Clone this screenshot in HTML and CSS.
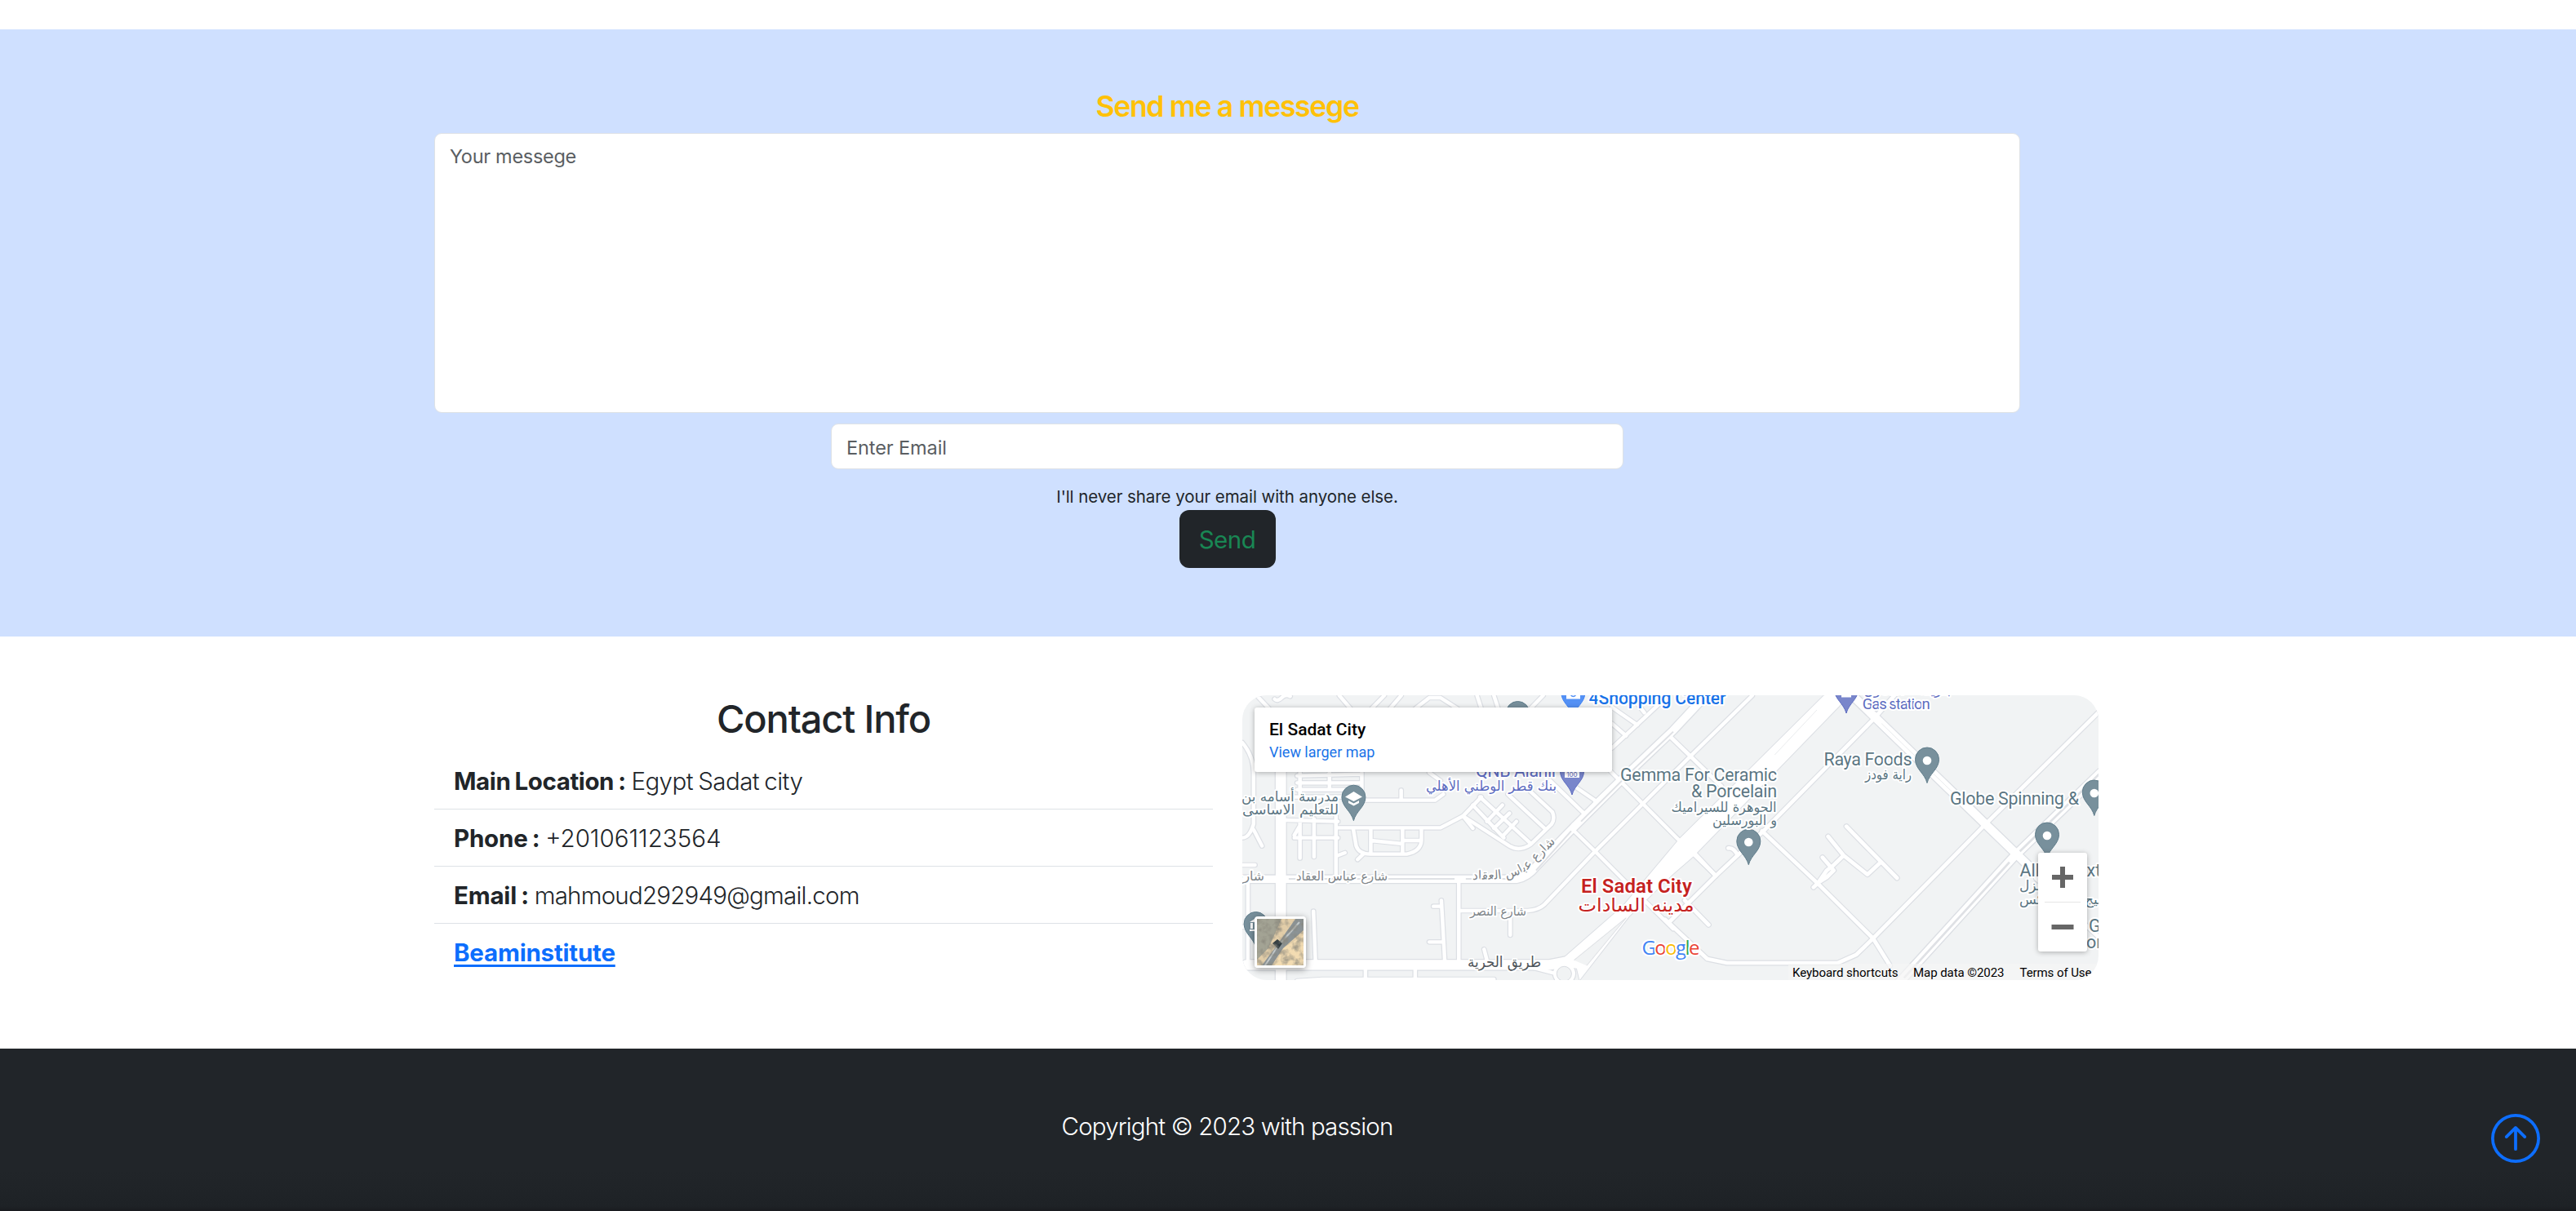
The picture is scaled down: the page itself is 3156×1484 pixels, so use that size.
FILE: index.html
```html
<!DOCTYPE html>
<html lang="en">
<head>
<meta charset="utf-8">
<title>Contact</title>
<link rel="stylesheet" href="styles.css">
</head>
<body>
<section class="message">
  <h3 class="message-title">Send me a messege</h3>
  <form class="message-form">
    <textarea class="field field-area" placeholder="Your messege"></textarea>
    <input class="field field-email" type="email" placeholder="Enter Email">
    <p class="hint">I'll never share your email with anyone else.</p>
    <button class="send" type="button">Send</button>
  </form>
</section>

<section class="contact">
  <div class="info">
    <h2 class="info-title">Contact Info</h2>
    <ul class="info-list">
      <li><b class="place">Main Location :</b> <span class="city">Egypt Sadat city</span></li>
      <li><b>Phone :</b> <span>+201061123564</span></li>
      <li><b>Email :</b> <span class="address">mahmoud292949@gmail.com</span></li>
      <li><a href="#">Beaminstitute</a></li>
    </ul>
  </div>
  <div class="map">
    <svg class="map-canvas" viewBox="0 0 1049 349" width="1049" height="349">
      <defs>
        <g id="west-minor">
          <path d="M805 828H1050Q1090 825 1110 805L1290 610L1629 260L1849 37"/>
          <path d="M1330 300L1460 435L1580 560L1720 700M1215 535L1290 610L1420 745M1470 795L1568 895"/>
          <path d="M375 523H740L820 480L885 410M470 422H720L750 400M600 422V385M820 480L855 525"/>
          <path d="M820 480L985 590Q1020 612 1060 585L1135 510Q1148 490 1138 465L1060 390"/>
          <path d="M855 440L965 560M905 500L960 440M930 525L985 470M960 555L1010 500M880 410L1060 580M980 400L1110 525"/>
          <path d="M1215 370L1300 430M1130 350L1250 470M700 320L740 350M1290 430L1400 320"/>
          <path d="M368 480V700M430 530L440 590Q450 620 490 620H620Q670 610 672 570V530M492 530V620M605 530V615M492 570L605 582M605 570H670M465 620L445 640M375 625L400 615"/>
          <path d="M220 560H375M290 490V630M240 500V635M240 515L220 550M190 495L375 500"/>
          <path d="M230 332L460 326M230 358H460M230 383H460M240 320V400M345 320V380M460 320V400M190 410H390"/>
          <path d="M35 210Q75 260 75 320V510Q60 560 35 560M75 530L105 590M35 660H80M55 712V1010M35 888H55"/>
          <path d="M288 830L295 1010M805 712V1010M743 790L755 1010M715 812H743M700 943H750M988 850V918M895 970L905 1010"/>
          <path d="M473 1045V1083M650 1045V1083M230 1086L320 1080H930"/>
          <path d="M80 30L130 85M150 50Q160 60 175 45T205 40M380 37L420 85M495 85L540 37M560 85L600 37M650 85L700 45H740L800 85M870 37L885 85M930 37L945 85M1060 85L1105 37"/>
          <path d="M1350 230L1568 20M1350 140L1400 185M1350 80L1440 145M1420 40L1465 100"/>
          <circle cx="1180" cy="1060" r="33"/>
          <path d="M1060 1035L1145 1058"/>
        </g>
        <g id="west-major">
          <path d="M190 712H1010Q1050 705 1080 665L1215 520L1400 330L1568 165L1690 30"/>
          <path d="M0 712H160"/>
        </g>
        <g id="west-trunk">
          <path d="M172 300V1100M50 1027H1130L1190 1015"/>
        </g>
        <g id="highway">
          <path d="M2104 37L1589 565L1390 810L1180 1000L1140 1030L1225 1040L1235 1083L1410 850L1568 692L1640 628L2159 75L2200 20Z"/>
        </g>
        <g id="east-minor">
          <path d="M830 20L745 120L350 535L180 700L15 870M90 600L180 700M225 598Q245 595 258 625M70 790L155 880M10 180L90 260L200 370"/>
          <path d="M345 535L540 725L740 930L800 1030"/>
          <path d="M528 742L545 725L575 680L595 665L635 625M560 632L600 680L575 705L545 725M580 555L635 625L720 695L765 652M645 518L825 708"/>
          <path d="M0 860L150 1005L220 1020H615L680 990L740 930L1135 515L1550 90M1320 710L1542 925"/>
        </g>
        <g id="east-major">
          <path d="M665 35L1250 620L1300 670"/>
          <path d="M835 1090L1240 630L1550 320"/>
        </g>
        <g id="pin"><path d="M0 29C-3 17-14.500 12-14.500 0A14.500 14.500 0 0 1 14.500 0C14.500 12 3 17 0 29Z"/></g>
      </defs>
      <rect width="1049" height="349" fill="#f1f3f4"/>
      <g class="casing">
        <g transform="translate(-12 -12) scale(.3444 .3333)">
          <use href="#west-minor" stroke-width="20"/><use href="#west-major" stroke-width="36"/><use href="#west-trunk" stroke-width="44"/><use href="#highway" stroke-width="6"/>
        </g>
        <g transform="translate(518 -12) scale(.3444 .3333)">
          <use href="#east-minor" stroke-width="21"/><use href="#east-major" stroke-width="38"/>
        </g>
      </g>
      <g class="road">
        <g transform="translate(-12 -12) scale(.3444 .3333)">
          <use href="#west-minor" stroke-width="13"/><use href="#west-major" stroke-width="28"/><use href="#west-trunk" stroke-width="37"/><use href="#highway" fill="#fff" stroke-width="0"/>
        </g>
        <g transform="translate(518 -12) scale(.3444 .3333)">
          <use href="#east-minor" stroke-width="14"/><use href="#east-major" stroke-width="30"/>
        </g>
      </g>
      <g class="median">
        <g transform="translate(-12 -12) scale(.3444 .3333)">
          <path d="M200 711H790M830 711H1000M1080 680L1205 535M1240 500L1400 335L1568 170" stroke-width="6"/>
          <path d="M1215 1010L1400 855L1260 1030" fill="#f1f3f4" stroke-width="3"/>
        </g>
        <g transform="translate(518 -12) scale(.3444 .3333)">
          <path d="M850 1075L1225 650M1262 610L1550 320" stroke-width="8"/>
          <path d="M540 90L390 255M770 140L1030 400" stroke-width="2"/>
        </g>
      </g>
      <circle cx="394.300" cy="341.300" r="9" fill="#f1f3f4" stroke="#d9dce1"/>

      <g class="pins">
        <use href="#pin" x="136.400" y="124.700" class="pin-gray"/>
        <path d="M126 124.500L136.500 118L147 124.500L136.500 130ZM130 129L136.500 132.500L143 129V132L136.500 135.500L130 132Z" fill="#fff"/>
        <use href="#pin" x="337.500" y="22" class="pin-gray"/>
        <use href="#pin" x="405.400" y="-3" class="pin-blue"/>
        <path d="M397 -4H414V4.500H397Z" fill="#fff"/><path d="M402 -1Q405.500 4 409 -1" fill="none" stroke="#5491f5" stroke-width="1.500"/>
        <use href="#pin" x="404" y="93" class="pin-violet"/>
        <path d="M395 92H413V101H395Z" fill="#fff"/><text x="404" y="100" font-size="8" text-anchor="middle" fill="#5c6bc0">100</text>
        <use href="#pin" x="740" y="-7" class="pin-violet"/><path d="M734 0H746V2.500H734Z" fill="#fff"/>
        <use href="#pin" x="620.300" y="178.700" class="pin-gray"/><circle cx="620.300" cy="180" r="5.300" fill="#fff"/>
        <use href="#pin" x="839" y="78.500" class="pin-gray"/><circle cx="839" cy="80" r="5.300" fill="#fff"/>
        <use href="#pin" x="1043.800" y="118.500" class="pin-gray"/><circle cx="1043.800" cy="120" r="5.300" fill="#fff"/>
        <use href="#pin" x="986" y="170.500" class="pin-gray"/><circle cx="986" cy="172" r="5.300" fill="#fff"/>
        <use href="#pin" x="16.600" y="280" class="pin-gray"/>
        <path d="M9 278L16.500 273L24 278ZM10 279H13V286H10ZM15 279H18V286H15ZM9 287H24V289H9Z" fill="#fff"/>
      </g>

      <g class="label slate">
        <text x="463" y="104.700" textLength="192">Gemma For Ceramic</text>
        <text x="550" y="125" textLength="105">&amp; Porcelain</text>
        <text x="712.500" y="85.700" textLength="108">Raya Foods</text>
        <text x="867" y="133.700" textLength="158">Globe Spinning &amp;</text>
        <text x="952.600" y="222.300">Alk</text><text x="1034.500" y="222.300">xt</text>
        <text x="1037" y="289.700">G</text><text x="1034" y="309.700">or</text>
        <g class="ar">
          <text x="525.600" y="142.700" textLength="129" lengthAdjust="spacingAndGlyphs">الجوهرة للسيراميك</text>
          <text x="576" y="159" textLength="79" lengthAdjust="spacingAndGlyphs">و البورسلين</text>
          <text x="763" y="102.700" textLength="57" lengthAdjust="spacingAndGlyphs">راية فودز</text>
          <text x="-1" y="130" textLength="119" lengthAdjust="spacingAndGlyphs">مدرسة أسامه بن</text>
          <text x="0" y="146" textLength="118" lengthAdjust="spacingAndGlyphs">للتعليم الاساسى</text>
          <text x="952" y="239">غزل</text><text x="952" y="256">كس</text><text x="1032" y="256">سيج</text>
        </g>
      </g>
      <g class="label violet">
        <text x="286" y="99.700" textLength="98">QNB Alahli</text>
        <text x="759.700" y="17.300" font-size="18.500" textLength="83">Gas station</text>
        <g class="ar">
          <text x="225" y="117" textLength="160" lengthAdjust="spacingAndGlyphs">بنك قطر الوطني الأهلي</text>
          <text x="761" y="-1" textLength="107" lengthAdjust="spacingAndGlyphs">بنزينة - التعاون</text>
        </g>
      </g>
      <text class="label blue" x="424.600" y="11.300" textLength="168">4Shopping Center</text>
      <g class="label street">
        <text x="-8" y="226.700" textLength="35" lengthAdjust="spacingAndGlyphs">شارع</text>
        <text x="66" y="226.700" textLength="112" lengthAdjust="spacingAndGlyphs">شارع عباس العقاد</text>
        <path id="bend" d="M282 226L312 225.500Q340 223 354 210L386 178" fill="none" stroke="none"/>
        <text><textPath href="#bend">شارع عباس العقاد</textPath></text>
        <text x="279" y="269.700" textLength="69" lengthAdjust="spacingAndGlyphs">شارع النصر</text>
        <text class="street-main" x="276" y="333" textLength="90" lengthAdjust="spacingAndGlyphs">طريق الحرية</text>
      </g>
      <g class="label red">
        <text x="415" y="242" textLength="136">El Sadat City</text>
        <text class="red-ar" x="411.500" y="265" textLength="142" lengthAdjust="spacingAndGlyphs">مدينه السادات</text>
      </g>
      <text class="label google" x="489.500" y="318" textLength="71"><tspan fill="#4285f4">G</tspan><tspan fill="#ea4335">o</tspan><tspan fill="#fbbc04">o</tspan><tspan fill="#4285f4">g</tspan><tspan fill="#34a853">l</tspan><tspan fill="#ea4335">e</tspan></text>
      <rect x="669" y="329" width="380" height="20" fill="#f5f5f5" fill-opacity=".7"/>
      <g class="legal">
        <text x="674" y="345" textLength="129.500">Keyboard shortcuts</text>
        <text x="822" y="345" textLength="111.500">Map data ©2023</text>
        <text x="952.500" y="345" textLength="88">Terms of Use</text>
      </g>
    </svg>
    <div class="place-card">
      <strong>El Sadat City</strong>
      <a href="#">View larger map</a>
    </div>
    <div class="satellite">
      <svg viewBox="0 0 57 57" width="57" height="57">
        <filter id="terrain" x="0" y="0" width="100%" height="100%">
          <feTurbulence type="fractalNoise" baseFrequency=".13" numOctaves="3" seed="4"/>
          <feColorMatrix values="0 0 0 0 .25  0 0 0 0 .24  0 0 0 0 .2  1.800 0 0 0 -.7"/>
        </filter>
        <rect width="57" height="57" fill="#e2cda8"/>
        <path d="M0 0H30L14 36L0 50Z" fill="#a3a394"/>
        <path d="M32 36L57 20V57H22Z" fill="#f3dcb2"/>
        <path d="M6 57L24 33L50 -4H57V14L32 36L18 57Z" fill="#8b9396"/>
        <path d="M10 57L25 34L52 4" stroke="#c3c9ca" stroke-width="2" fill="none"/>
        <path d="M19 30L25 25L31 30L26 37Z" fill="#2f3a3f"/>
        <rect width="57" height="57" filter="url(#terrain)"/>
      </svg>
    </div>
    <div class="zoom">
      <svg viewBox="0 0 60 121" width="60" height="121">
        <path d="M30 17V43M17 30H43M16.500 91H43.500" stroke="#666" stroke-width="6"/>
        <path d="M8 60.500H52" stroke="#e6e6e6"/>
      </svg>
    </div>
  </div>
</section>

<footer class="footer">
  <p class="copyright">Copyright © 2023 with passion</p>
  <a class="to-top" href="#" aria-label="Back to top">
    <svg viewBox="0 0 16 16" width="60" height="60" fill="currentColor"><path fill-rule="evenodd" d="M1 8a7 7 0 1 0 14 0A7 7 0 0 0 1 8zm15 0A8 8 0 1 1 0 8a8 8 0 0 1 16 0zm-7.500 3.500a.5.5 0 0 1-1 0V5.707L5.354 7.854a.5.5 0 1 1-.708-.708l3-3a.5.5 0 0 1 .708 0l3 3a.5.5 0 0 1-.708.708L8.500 5.707V11.500z"/></svg>
  </a>
</footer>
</body>
</html>
```

FILE: styles.css
```css
* { box-sizing: border-box; }
body {
  margin: 0;
  background: #fff;
  color: #212529;
  font: 400 23.5px/36px Inter, "Noto Sans", sans-serif;
}
.message {
  margin-top: 36px;
  height: 744px;
  padding: 73px 681px 0 532px;
  background: #cfe0ff;
}
.message-title {
  margin: 0 0 11px;
  font-size: 35.5px;
  line-height: 43px;
  font-weight: 600;
  letter-spacing: -1.3px;
  text-align: center;
  color: #ffc107;
}
.message-form { display: flex; flex-direction: column; align-items: center; }
.field {
  display: block;
  margin: 0;
  background: #fff;
  border: 1px solid #dee2e6;
  border-radius: 9px;
  padding: 10px 18px 8px;
  font: inherit;
  letter-spacing: -.3px;
  outline: 0;
  resize: none;
}
.field::placeholder { color: #5a5e62; opacity: 1; }
.field-area { width: 1943px; height: 343px; }
.field-email { width: 971px; height: 56px; margin-top: 13px; letter-spacing: -.1px; }
.hint { margin: 18px 0 0; font-size: 20.5px; line-height: 32px; letter-spacing: -.07px; }
.send {
  width: 118px;
  height: 71px;
  padding: 1px 0 0;
  border: 0;
  border-radius: 12px;
  background: #212529;
  color: #198754;
  font: 400 29.5px/45px Inter, sans-serif;
  letter-spacing: -.5px;
}
.contact {
  display: flex;
  gap: 36px;
  height: 505px;
  padding: 72px 0 0 532px;
}
.info { width: 954px; }
.info-title {
  margin: 0 0 12px;
  font-size: 47px;
  line-height: 58px;
  font-weight: 500;
  letter-spacing: -1.15px;
  text-align: center;
}
.info-list { margin: 0; padding: 0; list-style: none; font-size: 29.5px; line-height: 45px; font-weight: 300; }
.info-list li { height: 70px; padding: 13px 24px 11px; border-bottom: 1px solid #dee2e6; white-space: pre; word-spacing: -1.5px; }
.info-list li:last-child { border: 0; }
.info-list b, .info-list a { font-weight: 700; letter-spacing: -.2px; }
.info-list .place { letter-spacing: -.4px; }
.info-list .city { letter-spacing: -.55px; }
.info-list .address { letter-spacing: -.78px; }
.info-list a { color: #0d6efd; text-decoration: underline; text-underline-offset: 4px; text-decoration-thickness: 3px; }

.map { position: relative; width: 1049px; height: 349px; border-radius: 30px; overflow: hidden; }
.map-canvas { display: block; }
.casing, .road, .median { fill: none; stroke-linecap: round; stroke-linejoin: round; }
.casing { stroke: #dcdfe4; }
.road { stroke: #fff; }
.median { stroke: #dfe1e5; stroke-linecap: butt; }
.pin-gray { fill: #78909c; stroke: #607d8b; }
.pin-blue { fill: #5491f5; stroke: #4285f4; }
.pin-violet { fill: #7986cb; stroke: #5c6bc0; }
.label { font-family: Roboto, "DejaVu Sans", sans-serif; font-size: 21.5px; paint-order: stroke; stroke: #fff; stroke-width: 4px; stroke-linejoin: round; }
.label .ar { font-family: "DejaVu Sans", sans-serif; font-size: 17px; }
.slate { fill: #5b7683; }
.violet { fill: #5c6bc0; }
.blue { fill: #1a73e8; font-weight: 500; }
.street { fill: #80868b; font: 15.5px "DejaVu Sans", sans-serif; }
.street-main { fill: #50565b; font-size: 18px; }
.red { fill: #c5221f; font-size: 24px; font-weight: 600; }
.red-ar { font: 400 23px "DejaVu Sans", sans-serif; }
.google { font: 500 24px "Open Sans", sans-serif; }
.legal { font: 15px Roboto, sans-serif; fill: #000; }
.place-card {
  position: absolute;
  left: 15px;
  top: 15px;
  width: 438px;
  height: 79px;
  padding: 14px 18px;
  display: flex;
  flex-direction: column;
  border-radius: 3px;
  background: #fff;
  box-shadow: 0 1px 6px rgba(0, 0, 0, .3);
  font: 18px/27px Roboto, sans-serif;
}
.place-card strong { font-size: 21px; font-weight: 500; color: #000; }
.place-card a { color: #1a73e8; text-decoration: none; }
.satellite {
  position: absolute;
  left: 15px;
  top: 271px;
  width: 63px;
  height: 63px;
  border: 3px solid #fff;
  border-radius: 4px;
  box-shadow: 0 2px 8px rgba(0, 0, 0, .4);
}
.satellite svg, .zoom svg { display: block; }
.zoom {
  position: absolute;
  left: 975px;
  top: 193px;
  width: 60px;
  height: 121px;
  border-radius: 3px;
  background: #fff;
  box-shadow: 0 1px 6px rgba(0, 0, 0, .3);
}
.footer {
  position: relative;
  height: 199px;
  padding: 73px 149px 0 0;
  background: linear-gradient(#212529 75%, #1e2226 97%, #191b1f);
  color: #fff;
}
.copyright { margin: 0; text-align: center; font-size: 29.5px; line-height: 45px; font-weight: 300; letter-spacing: -.84px; }
.to-top { position: absolute; left: 3052px; top: 80px; height: 60px; color: #0d6efd; }
.to-top svg { display: block; }
```
